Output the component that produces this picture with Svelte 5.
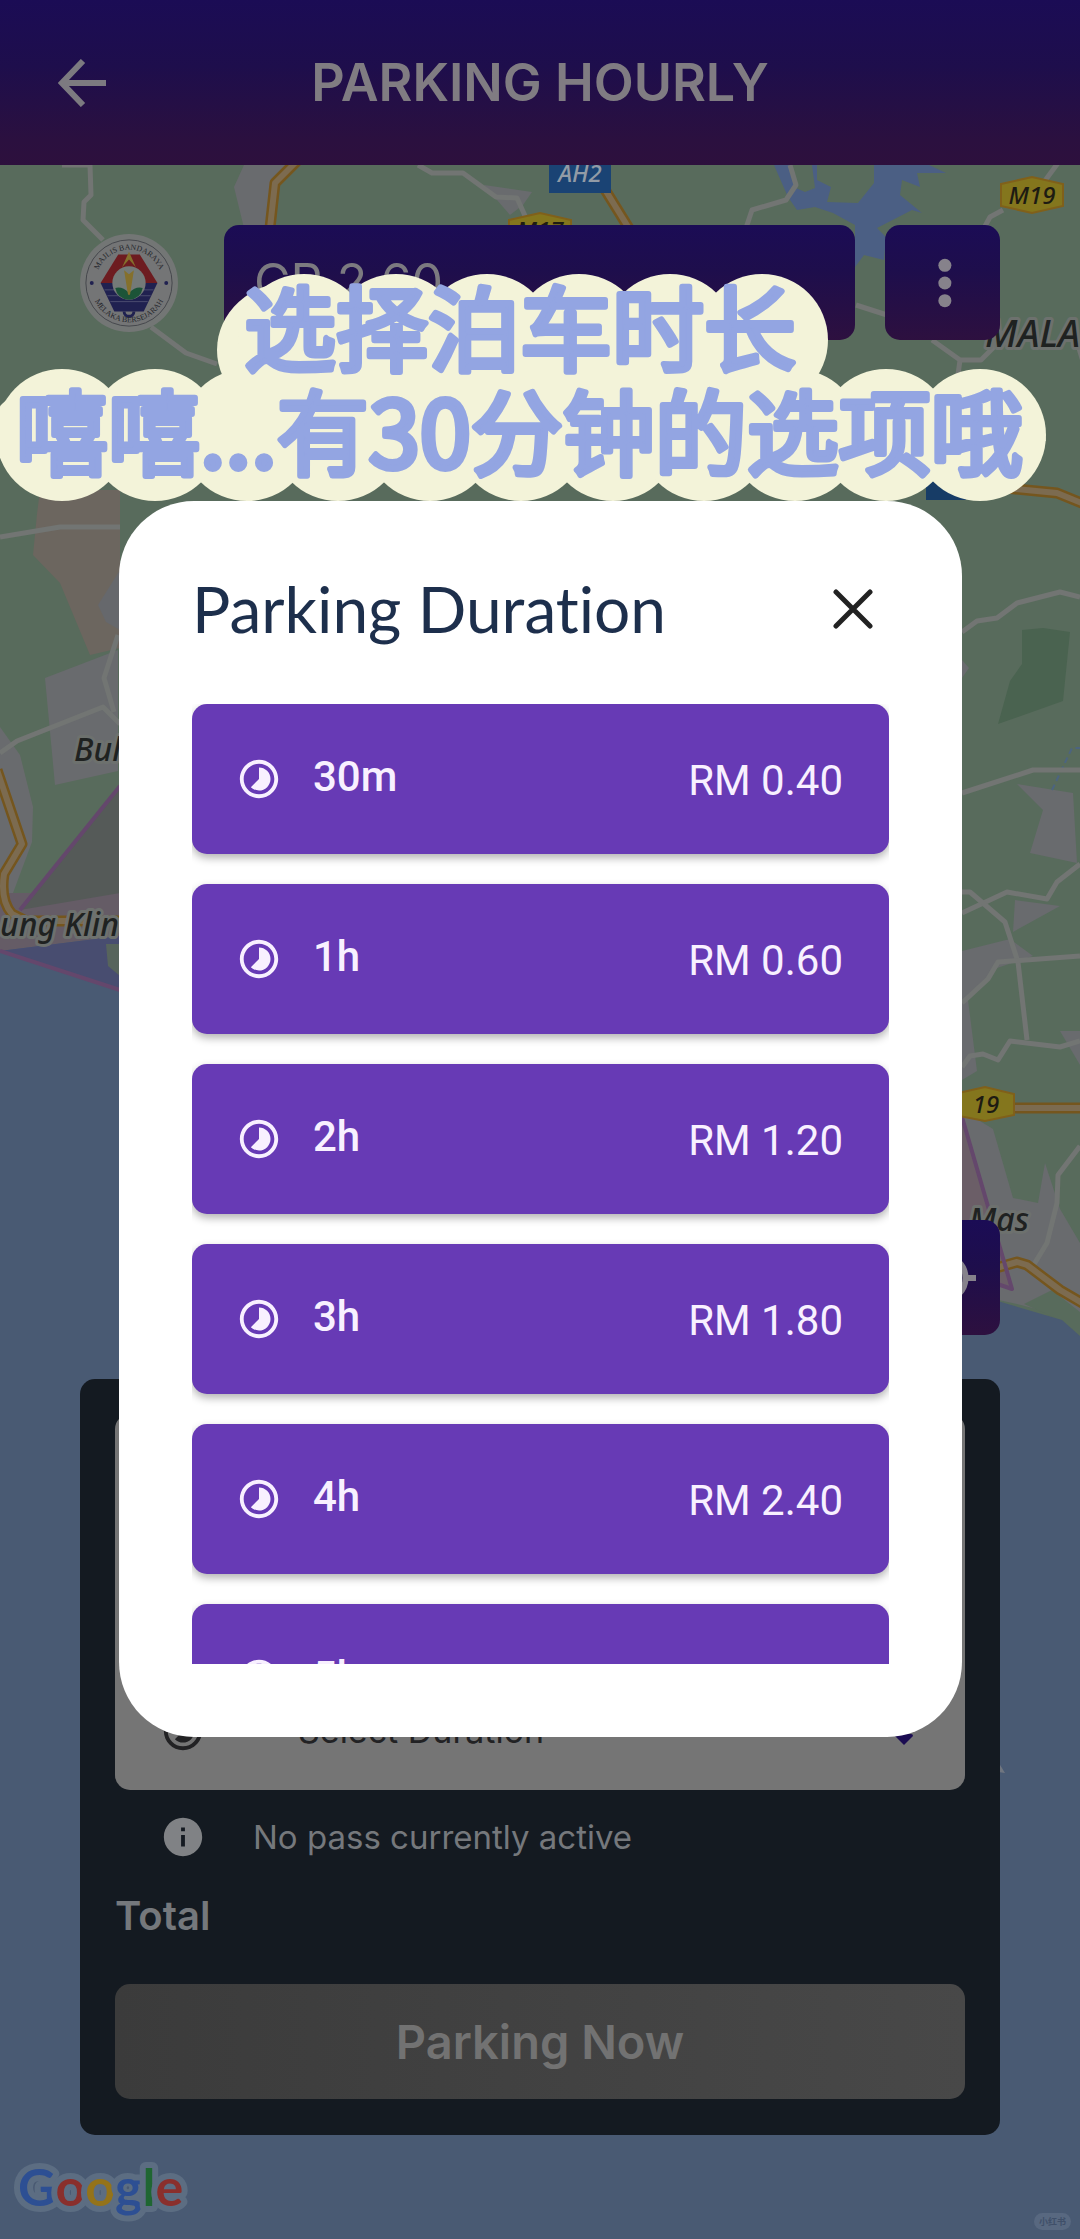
<script lang="ts">
	const durations = [
		{ label: '30m', price: 'RM 0.40' },
		{ label: '1h', price: 'RM 0.60' },
		{ label: '2h', price: 'RM 1.20' },
		{ label: '3h', price: 'RM 1.80' },
		{ label: '4h', price: 'RM 2.40' },
		{ label: '5h', price: 'RM 3.00' }
	];

	let open = $state(true);
	let selected = $state('');

	function choose(label: string) {
		selected = label;
		open = false;
	}

	const minorRoads = [
		'M62 165H90L91 195 84 202 83 220 103 240',
		'M151 327 186 353 217 364',
		'M418 165 432 173H463L496 197 517 198 526 218',
		'M790 165 796 185 786 200 752 210 746 228',
		'M1058 163 1044 182M1003 210 990 217 984 228',
		'M856 305 887 315M932 340 960 360H981L1003 338M960 360 957 382M1078 345 1084 365',
		'M962 632 977 621 997 618 1017 603 1060 592 1080 597',
		'M962 793 1033 770H1080',
		'M962 913 1007 892 1047 899 1057 882 1080 864',
		'M962 892H970L1005 922 1018 962 1027 1040',
		'M962 1003 988 979 998 962 1080 956',
		'M962 1067 970 1056 983 1054 998 1060 1010 1041 1060 1047 1080 1041',
		'M1080 1146 1058 1175 1057 1203 1047 1243 1033 1266',
		'M0 537 60 527H120',
		'M118 635 104 678 114 712',
		'M0 753 17 741 103 707 120 724'
	];
	const mainRoads = [
		'M298 160 275 183 270 228',
		'M604 188 630 230',
		'M1005 488 1057 493 1084 504',
		'M1010 1108H1084',
		'M996 1268 1017 1262 1027 1265 1060 1290 1084 1304',
		'M-3 770 22 844 4 874Q0 900 12 914L26 921H120'
	];

	const topLobes = [304, 396, 487, 579, 670, 762];
	const upperLobes = [75, 168, 260, 804, 890, 980];
	const lowerLobes = [62, 155, 247, 338, 430, 521, 613, 704, 795, 886, 980];
</script>

{#snippet timelapse()}
	<svg class="timelapse" viewBox="0 0 24 24" fill="currentColor" aria-hidden="true"><path d="M16.24 7.76C15.07 6.59 13.54 6 12 6v6l-4.24 4.24c2.34 2.34 6.14 2.34 8.49 0 2.34-2.34 2.34-6.14-.01-8.48zM12 2C6.48 2 2 6.48 2 12s4.48 10 10 10 10-4.48 10-10S17.52 2 12 2zm0 18c-4.42 0-8-3.58-8-8s3.58-8 8-8 8 3.58 8 8-3.58 8-8 8z"/></svg>
{/snippet}

<div class="screen">
	<svg class="map" viewBox="0 0 1080 2239" preserveAspectRatio="xMidYMin slice" aria-hidden="true">
		<rect width="1080" height="2239" fill="#586b5c" />
		<g fill="#696b6e">
			<path d="M244 165 234 187 244 228H268L275 183 296 165Z" />
			<path d="M484 185 532 192 523 205 510 215Z" />
			<path d="M45 678 118 650V771L55 785Z" />
			<path d="M0 727 20 755 33 807 32 842 13 893H0Z" />
			<path d="M1017 784 1073 793 1077 863 1030 853 1043 810Z" />
			<path d="M1015 900 1060 906 1013 932Z" />
			<path d="M962 951 1010 939 1033 956 997 968 968 1000 977 1071 962 1080Z" />
			<path d="M962 660 969 668 962 678Z" />
			<path d="M1060 1031H1080V1065Z" />
			<path d="M962 1110 993 1129 1013 1198 1038 1203 1045 1163 1060 1209 1080 1243V1320L1017 1304 962 1292Z" />
		</g>
		<path d="M40 490 37 514 33 555 60 583 90 655 120 648V490Z" fill="#6c665f" />
		<path d="M120 570 98 605 106 622 120 630Z" fill="#66686c" />
		<path d="M1022 630 1043 628 1070 632 1063 701 998 724 1010 681 1022 664Z" fill="#4a6350" />
		<path d="M1024 1304 1052 1290 1080 1312V1336L1060 1320Z" fill="#586b5c" />
		<path d="M0 893H120V940L0 951Z" fill="#655c66" />
		<path d="M20 910 120 786V893Z" fill="#555a58" />
		<path d="M962 1117 1013 1289 962 1270Z" fill="#6b5e67" />
		<path d="M0 951 120 936V990L960 1290 1001 1302 1062 1320 1080 1336V2239H0Z" fill="#495a73" />
		<path d="M0 951 120 936V990Z" fill="#484d70" />
		<path d="M106 944H120V976L108 966Z" fill="#57645c" />
		<path d="M774 165 788 197 797 210 815 207 833 213 855 225V267L864 255 884 260 886 237 877 228 912 210 922 213 900 195 902 180 920 187 917 173 946 173 929 165H874V183L858 203 827 202 831 187 817 180V165H812L815 188 805 192 796 188 790 165Z" fill="#4b5f84" />
		<path d="M985 1770 997 1760 1005 1773Z" fill="#707680" />
		<path d="M1052 790 1072 748H1080" fill="none" stroke="#4c6480" stroke-width="2" stroke-dasharray="6 4" />
		<g fill="none" stroke="#727573" stroke-width="5" stroke-linejoin="round">
			{#each minorRoads as d}
				<path {d} />
			{/each}
		</g>
		<g fill="none" stroke-linejoin="round">
			{#each mainRoads as d}
				<path {d} stroke="#75561e" stroke-width="11" />
				<path {d} stroke="#7c6b50" stroke-width="6" />
			{/each}
			<path d="M20 910 120 786M0 951 120 990M962 1117 1012 1289 962 1272" stroke="#64476c" stroke-width="4" />
		</g>
		<g class="shields">
			<rect x="549" y="150" width="62" height="43" fill="#1a4374" />
			<rect x="926" y="480" width="40" height="20" fill="#173c66" />
			<path d="M1001 184 1032 177 1063 184V206L1032 213 1001 206Z" />
			<path d="M509 220 540 213 571 220V242L540 249 509 242Z" />
			<path d="M954 1094 985 1087 1014 1094V1115L985 1121 954 1115Z" />
			<text x="580" y="182" fill="#929ba6">AH2</text>
			<text x="1032" y="204">M19</text>
			<text x="540" y="239">M17</text>
			<text x="986" y="1113">19</text>
		</g>
		<g class="places">
			<text x="985" y="347" font-size="38">MALA</text>
			<text x="74" y="761">Bul</text>
			<text x="0" y="936">ung Klin</text>
			<text x="969" y="1231">Mas</text>
		</g>
	</svg>

	<header class="app-bar">
		<button class="back" aria-label="Back">
			<svg viewBox="0 0 48 48" fill="none" stroke="currentColor" stroke-width="6"><path d="M25 2 4 24l21 22M4 24h44" /></svg>
		</button>
		<h1>PARKING HOURLY</h1>
	</header>

	<main>
		<div class="toolbar">
			<svg class="council" viewBox="0 0 100 100" role="img" aria-label="Majlis Bandaraya Melaka Bersejarah">
				<defs>
					<path id="ring-top" d="M16 50a34 34 0 0 1 68 0" />
					<path id="ring-bottom" d="M11 51a39 39 0 0 0 78 0" />
				</defs>
				<circle cx="50" cy="50" r="50" fill="#737675" />
				<circle cx="50" cy="50" r="44" fill="#747576" stroke="#45474c" />
				<path d="M39 21H61L79 50H21Z" fill="#6d1c20" />
				<path d="M21 50H79L65 79H35Z" fill="#202150" />
				<path d="M25 57H75M28 63H72M31 69H69" stroke="#4b4d70" />
				<path d="M45 79a5 5 0 0 0 10 0" fill="none" stroke="#202150" stroke-width="3" />
				<circle cx="50" cy="50" r="17" fill="#747a78" />
				<path d="M36 55q7-2 14 5 7-7 14-5-2 11-14 12-12-1-14-12Z" fill="#1c5438" />
				<path d="M50 18 43 34 50 26 57 34Z" fill="#84702c" />
				<path d="M45 37 50 41 55 37 51 62H49Z" fill="#84702c" />
				<g fill="#202150">
					<circle cx="12" cy="50" r="2" />
					<circle cx="88" cy="50" r="2" />
				</g>
				<g class="ring-text">
					<text><textPath href="#ring-top" startOffset="50%">MAJLIS BANDARAYA</textPath></text>
					<text><textPath href="#ring-bottom" startOffset="50%">MELAKA BERSEJARAH</textPath></text>
				</g>
			</svg>
			<div class="credit">CR 2.60</div>
			<button class="square" aria-label="More options">
				<svg viewBox="0 0 60 60" fill="currentColor"><circle cx="32" cy="11" r="7" /><circle cx="32" cy="30" r="7" /><circle cx="32" cy="49" r="7" /></svg>
			</button>
		</div>

		<button class="square locate" aria-label="My location">
			<svg viewBox="0 0 24 24" fill="none" stroke="currentColor" stroke-width="2"><circle cx="12" cy="12" r="7.5" /><path d="M12 1v4M12 19v4M1 12h4M19 12h4" /><circle cx="12" cy="12" r="3" fill="currentColor" /></svg>
		</button>

		<section class="parking">
			<div class="fields">
				<label class="field">
					{@render timelapse()}
					<select aria-label="Duration" bind:value={selected}>
						<option value="">Select Duration</option>
						{#each durations as item}
							<option value={item.label}>{item.label}</option>
						{/each}
					</select>
					<svg class="caret" viewBox="0 0 18 12" fill="#1b0c52"><path d="M0 2Q0 0 2 0H16Q18 0 18 2L9 11Z" /></svg>
				</label>
			</div>
			<p class="pass">
				<svg viewBox="0 0 24 24" fill="currentColor" aria-hidden="true"><path d="M12 2C6.48 2 2 6.48 2 12s4.48 10 10 10 10-4.48 10-10S17.52 2 12 2zm1 15h-2v-6h2v6zm0-8h-2V7h2v2z"/></svg>
				No pass currently active
			</p>
			<p class="total">Total</p>
			<button class="submit">Parking Now</button>
		</section>
	</main>

	<footer>
		<svg class="google" viewBox="0 0 180 80" role="img" aria-label="Google">
			<text x="2" y="54"><tspan fill="#2d4f93">G</tspan><tspan fill="#8a2f2c">o</tspan><tspan fill="#94731a">o</tspan><tspan fill="#2d4f93">g</tspan><tspan fill="#1f6632">l</tspan><tspan fill="#8a2f2c">e</tspan></text>
		</svg>
		<span class="watermark">小红书</span>
	</footer>

	{#if open}
		<div class="overlay">
			<div class="modal" role="dialog" aria-modal="true" aria-labelledby="duration-title">
				<div class="modal-header">
					<h2 id="duration-title">Parking Duration</h2>
					<button class="close" aria-label="Close" onclick={() => (open = false)}>
						<svg viewBox="0 0 40 40" fill="none" stroke="currentColor" stroke-width="5" stroke-linecap="round"><path d="M3 3 37 37M37 3 3 37" /></svg>
					</button>
				</div>
				<div class="options">
					{#each durations as item}
						<button class="option" onclick={() => choose(item.label)}>
							{@render timelapse()}
							<span class="option-label">{item.label}</span>
							<span class="option-price">{item.price}</span>
						</button>
					{/each}
				</div>
			</div>
		</div>
	{/if}

	<svg class="sticker" viewBox="0 265 1080 240" role="img" aria-label="选择泊车时长 嘻嘻...有30分钟的选项哦">
		<defs>
			<clipPath id="upper-half"><rect y="265" width="1080" height="176" /></clipPath>
		</defs>
		<g fill="#f3f3d9">
			<ellipse cx="291" cy="350" rx="74" ry="68" />
			{#each topLobes as cx}
				<circle {cx} cy="340" r="66" />
			{/each}
			<g clip-path="url(#upper-half)">
				{#each upperLobes as cx}
					<circle {cx} cy="446" r="66" />
				{/each}
				<circle cx="45" cy="446" r="60" />
			</g>
			{#each lowerLobes as cx}
				<circle {cx} cy="435" r="66" />
			{/each}
			<path d="M240 340H800V440H240Z" />
		</g>
		<g class="sticker-text">
			<text x="244" y="364">选择泊车时长</text>
			<text x="16" y="468">嘻嘻...有30分钟的选项哦</text>
		</g>
	</svg>
</div>

<style>
	:global(body) {
		margin: 0;
		background: #495a73;
	}
	h1,
	h2,
	p {
		margin: 0;
	}
	button {
		border: 0;
		padding: 0;
		background: none;
		color: inherit;
		font: inherit;
		cursor: pointer;
	}
	svg {
		display: block;
	}
	.screen {
		position: relative;
		display: flex;
		flex-direction: column;
		min-height: 100vh;
		overflow: hidden;
		font-family: Inter, 'Noto Sans CJK SC', sans-serif;
		color: #7c7a80;
	}
	.map {
		position: absolute;
		inset: 0;
		width: 100%;
		height: 100%;
	}
	.shields {
		fill: #84761d;
		stroke: #80601a;
		stroke-width: 2;
	}
	.shields rect {
		stroke: none;
	}
	.shields text,
	.places text {
		font-family: 'Noto Sans', sans-serif;
		font-style: italic;
		font-weight: 500;
	}
	.shields text {
		font-size: 24px;
		text-anchor: middle;
		stroke: none;
	}
	.shields text:not([fill]) {
		fill: #1d1b12;
	}
	.places {
		font-size: 32px;
		fill: #1f2221;
		stroke: #6d716e;
		stroke-width: 6;
		stroke-linejoin: round;
		paint-order: stroke;
	}
	.app-bar {
		position: relative;
		display: grid;
		grid-template-columns: 48px 1fr 48px;
		align-items: center;
		height: 165px;
		padding: 0 58px;
		box-sizing: border-box;
		background: linear-gradient(#1b0c55, #1e0e4c 40%, #2b103f 85%, #2d103d);
	}
	.app-bar h1 {
		font-size: 52px;
		line-height: 60px;
		font-weight: 600;
		text-align: center;
		color: #807c82;
	}
	.back svg {
		width: 48px;
		height: 48px;
	}
	main {
		position: relative;
		flex: 1;
		display: flex;
		flex-direction: column;
		padding: 60px 80px 0;
	}
	.toolbar {
		display: flex;
		align-items: center;
		gap: 30px;
	}
	.council {
		width: 98px;
		height: 98px;
		margin-right: 16px;
	}
	.ring-text {
		font-family: 'Liberation Serif', serif;
		font-size: 8px;
		text-anchor: middle;
		fill: #25272c;
	}
	.credit,
	.square {
		height: 115px;
		border-radius: 15px;
		background: linear-gradient(#1b0c55, #1e0e4c 40%, #2d103f);
	}
	.credit {
		flex: 1;
		box-sizing: border-box;
		padding-left: 30px;
		font-size: 50px;
		line-height: 115px;
	}
	.square {
		display: grid;
		place-items: center;
		width: 115px;
		color: #86828b;
	}
	.square svg {
		width: 56px;
		height: 56px;
	}
	.locate {
		align-self: flex-end;
		margin-top: auto;
	}
	.locate svg {
		width: 72px;
		height: 72px;
	}
	.parking {
		margin-top: 44px;
		padding: 35px 35px 36px;
		border-radius: 15px;
		background: #141a21;
	}
	.fields {
		display: flex;
		flex-direction: column;
		justify-content: flex-end;
		height: 376px;
		border-radius: 15px;
		background: #757575;
	}
	.timelapse {
		width: 46px;
		height: 46px;
		flex: none;
	}
	.field {
		display: flex;
		align-items: center;
		height: 118px;
		padding: 0 52px 0 45px;
		color: #222224;
	}
	select {
		flex: 1;
		margin-left: 92px;
		padding: 0;
		border: 0;
		appearance: none;
		background: none;
		color: inherit;
		font: 34px/48px Inter, sans-serif;
	}
	.caret {
		width: 18px;
		height: 12px;
		margin-top: 18px;
	}
	.pass {
		display: flex;
		align-items: center;
		gap: 47px;
		height: 94px;
		padding-left: 45px;
		font-size: 33px;
		color: #75787c;
	}
	.pass svg {
		width: 46px;
		height: 46px;
		color: #808285;
	}
	.total {
		margin-bottom: 36px;
		font-size: 40px;
		line-height: 64px;
		font-weight: 600;
		color: #75787c;
	}
	.submit {
		width: 100%;
		height: 115px;
		border-radius: 15px;
		background: linear-gradient(90deg, #3b3b3b, #484848);
		font-size: 47px;
		font-weight: 600;
		color: #727272;
	}
	footer {
		position: relative;
		display: flex;
		justify-content: space-between;
		align-items: flex-end;
		height: 104px;
		padding: 0 9px 0 16px;
		box-sizing: border-box;
	}
	.google {
		width: 180px;
		height: 80px;
		overflow: visible;
		padding-bottom: 7px;
		box-sizing: content-box;
	}
	.google text {
		font: 700 52px Lato, sans-serif;
		stroke: #5c6d82;
		stroke-width: 12;
		stroke-linejoin: round;
		paint-order: stroke;
	}
	.watermark {
		margin-bottom: 9px;
		padding: 0 5px;
		border-radius: 9px;
		background: #586880;
		font-size: 9px;
		line-height: 17px;
		font-weight: 700;
		color: #3f4f69;
	}
	.overlay {
		position: absolute;
		inset: 0;
		padding: 501px 118px 0 119px;
	}
	.modal {
		padding: 58px 73px 73px;
		border-radius: 75px;
		background: #fff;
	}
	.modal-header {
		display: flex;
		justify-content: space-between;
		align-items: center;
		height: 100px;
		margin-bottom: 45px;
	}
	.modal h2 {
		font: 400 64px/100px Lato, sans-serif;
		font-variant-ligatures: none;
		color: #1d2f4c;
	}
	.close {
		display: grid;
		place-items: center;
		width: 72px;
		height: 72px;
		color: #222;
	}
	.close svg {
		width: 40px;
		height: 40px;
	}
	.options {
		display: flex;
		flex-direction: column;
		gap: 30px;
		max-height: 960px;
		overflow-y: auto;
		scrollbar-width: none;
	}
	.option {
		flex: none;
		display: flex;
		align-items: center;
		gap: 31px;
		height: 150px;
		padding: 0 46px 0 44px;
		border-radius: 15px;
		background: #673ab5;
		box-shadow: 0 4px 8px rgba(0, 0, 0, 0.3);
		font: 42px/48px Roboto, sans-serif;
		color: #f8f0ff;
	}
	.option-label {
		flex: 1;
		padding-bottom: 4px;
		font-weight: 500;
		text-align: left;
	}
	.option-price {
		padding-top: 4px;
	}
	.sticker {
		position: absolute;
		top: 265px;
		left: 0;
		width: 100%;
		pointer-events: none;
	}
	.sticker-text {
		font: 400 92px 'Noto Sans CJK SC', sans-serif;
		fill: #93a5e2;
		stroke: #93a5e2;
		stroke-width: 6;
		stroke-linejoin: round;
	}
</style>
